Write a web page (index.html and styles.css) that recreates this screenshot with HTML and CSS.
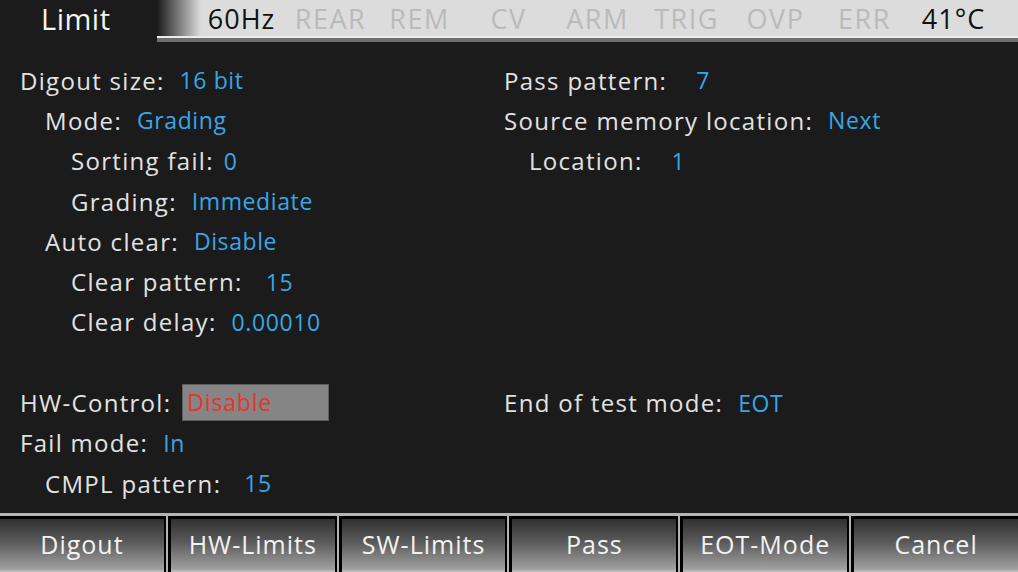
FILE: index.html
```html
<!DOCTYPE html>
<html>
<head>
<meta charset="utf-8">
<link rel="stylesheet" href="styles.css">
</head>
<body>
<div class="screen">
  <header class="topbar">
    <div class="tab">Limit</div>
    <div class="status">
      <span class="st on">60Hz</span>
      <span class="st">REAR</span>
      <span class="st">REM</span>
      <span class="st">CV</span>
      <span class="st">ARM</span>
      <span class="st">TRIG</span>
      <span class="st">OVP</span>
      <span class="st">ERR</span>
      <span class="st on">41°C</span>
    </div>
  </header>
  <main class="content">
    <div class="col left">
      <div class="row"><span class="lbl">Digout size:</span><span class="val g16">16 bit</span></div>
      <div class="row i1"><span class="lbl">Mode:</span><span class="val g16">Grading</span></div>
      <div class="row i2"><span class="lbl">Sorting fail:</span><span class="val g10">0</span></div>
      <div class="row i2"><span class="lbl">Grading:</span><span class="val g16">Immediate</span></div>
      <div class="row i1"><span class="lbl">Auto clear:</span><span class="val g16">Disable</span></div>
      <div class="row i2"><span class="lbl">Clear pattern:</span><span class="val g24">15</span></div>
      <div class="row i2"><span class="lbl">Clear delay:</span><span class="val g16">0.00010</span></div>
      <div class="row"></div>
      <div class="row"><span class="lbl">HW-Control:</span><span class="box">Disable</span></div>
      <div class="row"><span class="lbl">Fail mode:</span><span class="val g16">In</span></div>
      <div class="row i1"><span class="lbl">CMPL pattern:</span><span class="val g24">15</span></div>
    </div>
    <div class="col right">
      <div class="row"><span class="lbl">Pass pattern:</span><span class="val g28">7</span></div>
      <div class="row"><span class="lbl">Source memory location:</span><span class="val g16">Next</span></div>
      <div class="row i1"><span class="lbl">Location:</span><span class="val g28">1</span></div>
      <div class="row"></div>
      <div class="row"></div>
      <div class="row"></div>
      <div class="row"></div>
      <div class="row"></div>
      <div class="row"><span class="lbl">End of test mode:</span><span class="val g16">EOT</span></div>
    </div>
  </main>
  <footer class="softkeys">
    <div class="key">Digout</div>
    <div class="sep"></div>
    <div class="key">HW-Limits</div>
    <div class="sep"></div>
    <div class="key">SW-Limits</div>
    <div class="sep"></div>
    <div class="key">Pass</div>
    <div class="sep"></div>
    <div class="key">EOT-Mode</div>
    <div class="sep"></div>
    <div class="key">Cancel</div>
  </footer>
</div>
</body>
</html>
```
FILE: styles.css
```css
* { box-sizing: border-box; }
html, body {
  margin: 0;
  padding: 0;
  background: #1b1b1b;
}
.screen {
  width: 1018px;
  height: 572px;
  display: flex;
  flex-direction: column;
  background: #1b1b1b;
  font-family: "Open Sans", "DejaVu Sans", sans-serif;
  color: #e2e2e2;
  overflow: hidden;
}
.topbar {
  height: 42px;
  display: flex;
  flex: none;
}
.tab {
  width: 157px;
  height: 42px;
  padding-left: 41px;
  font-size: 29px;
  line-height: 38px;
  color: #f4f4f4;
  letter-spacing: 0.5px;
}
.status {
  flex: 1;
  height: 42px;
  display: grid;
  grid-template-columns: 40px repeat(9, 89px);
  background:
    linear-gradient(to bottom, transparent 36px, #ececec 36px, #ececec 38px, #6e6e6e 38px, #6e6e6e 42px),
    linear-gradient(to right, #1b1b1b 0, #dcdcdc 44px);
}
.status::before { content: ""; }
.st {
  text-align: center;
  font-size: 27px;
  line-height: 37px;
  color: #bababa;
  letter-spacing: 1.5px;
}
.st.on { color: #111; letter-spacing: 1px; }
.content {
  flex: 1;
  display: grid;
  grid-template-columns: 484px 1fr;
  padding: 18px 0 0 20px;
}
.row {
  height: 40.3px;
  display: flex;
  align-items: center;
  font-size: 24px;
  letter-spacing: 1.3px;
  white-space: nowrap;
}
.i1 { padding-left: 25px; }
.i2 { padding-left: 51px; }
.val { color: #38a6e6; font-size: 23px; letter-spacing: 0.6px; }
.g10 { margin-left: 10px; }
.g16 { margin-left: 15px; }
.g24 { margin-left: 23px; }
.g28 { margin-left: 29px; }
.box {
  margin-left: 11px;
  width: 147px;
  height: 37px;
  background: #858585;
  border: 1px solid #5e5e5e;
  color: #e8332b;
  font-size: 23px;
  letter-spacing: 0.8px;
  line-height: 34px;
  padding-left: 4px;
}
.softkeys {
  flex: none;
  height: 59px;
  display: flex;
  background: #000;
  border-top: 3px solid #b4b4b4;
  padding-top: 3px;
}
.key {
  flex: 1;
  height: 53px;
  background: linear-gradient(to bottom, #303030 0%, #5a5a5a 45%, #a2a2a2 100%);
  border-bottom: 2px solid #b8b8b8;
  color: #f2f2f2;
  font-size: 25px;
  letter-spacing: 1px;
  text-align: center;
  line-height: 50px;
}
.sep {
  width: 7px;
  margin-top: -3px;
  background: linear-gradient(to right, #000 0, #000 2px, #b4b4b4 2px, #b4b4b4 4px, #000 4px);
}
```
